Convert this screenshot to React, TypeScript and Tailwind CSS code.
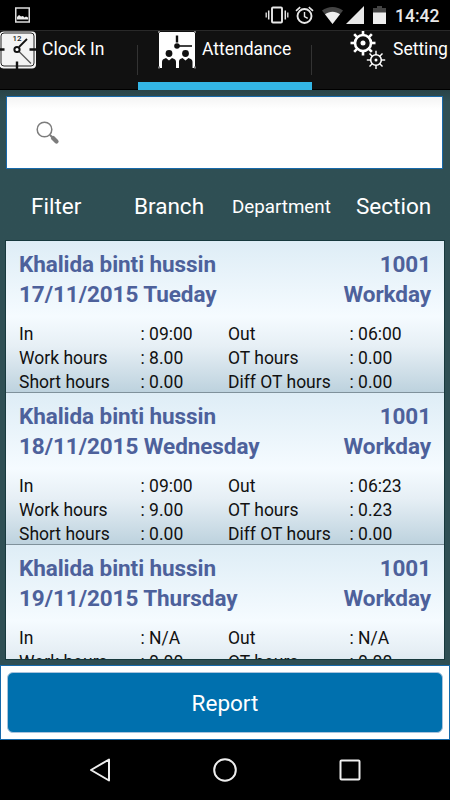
interface AttendanceRecord {
  name: string;
  staffId: string;
  date: string;
  dayType: string;
  timeIn: string;
  timeOut: string;
  workHours: string;
  otHours: string;
  shortHours: string;
  diffOtHours: string;
}

const records: AttendanceRecord[] = [
  {
    name: 'Khalida binti hussin',
    staffId: '1001',
    date: '17/11/2015 Tueday',
    dayType: 'Workday',
    timeIn: '09:00',
    timeOut: '06:00',
    workHours: '8.00',
    otHours: '0.00',
    shortHours: '0.00',
    diffOtHours: '0.00',
  },
  {
    name: 'Khalida binti hussin',
    staffId: '1001',
    date: '18/11/2015 Wednesday',
    dayType: 'Workday',
    timeIn: '09:00',
    timeOut: '06:23',
    workHours: '9.00',
    otHours: '0.23',
    shortHours: '0.00',
    diffOtHours: '0.00',
  },
  {
    name: 'Khalida binti hussin',
    staffId: '1001',
    date: '19/11/2015 Thursday',
    dayType: 'Workday',
    timeIn: 'N/A',
    timeOut: 'N/A',
    workHours: '0.00',
    otHours: '0.00',
    shortHours: '0.00',
    diffOtHours: '0.00',
  },
];

const gearTeeth = [0, 45, 90, 135, 180, 225, 270, 315];

function ClockIcon() {
  return (
    <svg className="h-[38px] w-[36px] shrink-0" viewBox="0 0 36 38" fill="none">
      <rect x="-0.5" y="0.5" width="36.5" height="37" rx="4" fill="#f4f4f4" />
      <rect x="1" y="2" width="33" height="33" rx="3" stroke="#222" strokeWidth="1" />
      <path d="M0 18.5h4.5M29.5 18.5h6.5M17 30.5v7.5" stroke="#111" strokeWidth="2.4" />
      <text x="12.5" y="9.5" fontSize="8" fontWeight="500" fill="#222" textLength="9" lengthAdjust="spacingAndGlyphs">
        12
      </text>
      <path d="M19 16l8-8" stroke="#111" strokeWidth="1.8" />
      <path d="M19 20.5l12 12" stroke="#555" strokeWidth="1.3" />
      <circle cx="17" cy="18.5" r="2.6" fill="#fff" stroke="#111" strokeWidth="2" />
    </svg>
  );
}

function AttendanceIcon() {
  return (
    <svg className="h-[38px] w-[38px] shrink-0" viewBox="0 0 38 38" fill="none">
      <rect x="1" y="1" width="36" height="36" fill="#fff" />
      <path d="M0 0h2v2H0zM36 0h2v2h-2zM0 35.5h2v2H0zM36 35.5h2v2h-2z" fill="#777" />
      <path d="M19 4.5v7" stroke="#111" strokeWidth="2.4" />
      <path d="M19 15h15" stroke="#111" strokeWidth="1.6" />
      <circle cx="19" cy="15" r="2.8" fill="#111" />
      <circle cx="11" cy="22.5" r="3.4" fill="#111" />
      <circle cx="27.5" cy="22.5" r="3.4" fill="#111" />
      <path
        d="M4 38v-7c0-2 1-3 3-3.5l1-.5 3 2.5 3-2.500 1 .5c2 .5 3 1.5 3 3.500v7zM21 38v-7c0-2 .5-3 2.500-3.500l1-.5 3 2.500 3-2.500 1 .5c2 .5 3 1.500 3 3.500v7z"
        fill="#111"
      />
    </svg>
  );
}

function SettingIcon() {
  return (
    <svg className="h-[38px] w-[36px] shrink-0" viewBox="0 0 36 38" fill="none" stroke="#fff">
      {gearTeeth.map((angle) => (
        <path key={angle} d="M13 5V-.5" strokeWidth="2.6" transform={`rotate(${angle} 13 12)`} />
      ))}
      <circle cx="13" cy="12" r="8" strokeWidth="2.6" />
      <circle cx="13" cy="12" r="2.5" fill="#fff" stroke="none" />
      {gearTeeth.map((angle) => (
        <path key={angle} d="M26 24v-4.2" strokeWidth="1.4" transform={`rotate(${angle} 26 29)`} />
      ))}
      <circle cx="26" cy="29" r="5.3" strokeWidth="1.6" />
      <circle cx="26" cy="29" r="1.5" fill="#fff" stroke="none" />
    </svg>
  );
}

function StatusBar() {
  return (
    <div className="flex h-[30px] shrink-0 items-center bg-black pr-[10px] pl-[15px]">
      <svg className="h-4 w-[15px]" viewBox="0 0 15 16" fill="none">
        <rect x="0.75" y="1" width="13.5" height="14" stroke="#ddd" strokeWidth="1.5" />
        <path d="M2 12.5V10l2-2 2 1.5 2-.5 1.5 1.5L11 9.5l2 1v2z" fill="#eee" />
      </svg>
      <svg className="ml-auto h-5 w-[24px]" viewBox="0 0 24 20" fill="none" stroke="#e8e8e8">
        <rect x="7" y="2.5" width="10" height="15" rx="1" strokeWidth="1.9" />
        <path d="M3.7 5.5v9M20.3 5.5v9" strokeWidth="1.5" />
        <path d="M1.2 7.5v5M22.8 7.5v5" strokeWidth="1.3" />
      </svg>
      <svg className="ml-[6px] h-5 w-[19px]" viewBox="0 0 19 20" fill="none" stroke="#e8e8e8">
        <circle cx="9.5" cy="11" r="7" strokeWidth="1.9" />
        <path d="M1 5.8l4.2-3.6M18 5.8l-4.2-3.6" strokeWidth="1.7" />
        <path d="M9.5 7v4.5l3.2 1.9" strokeWidth="1.4" />
      </svg>
      <svg className="ml-[7px] h-5 w-[23px]" viewBox="0 0 23 20">
        <path d="M11.5 19L1 5.5c6-4.700 15-4.700 21 0z" fill="#444" />
        <path d="M11.5 19L4 9.300c4.300-3.400 10.700-3.400 15 0z" fill="#eee" />
      </svg>
      <svg className="ml-[2px] h-5 w-[18px]" viewBox="0 0 18 20">
        <path d="M0 19L18 1v18z" fill="#e8e8e8" />
      </svg>
      <svg className="ml-[9px] h-5 w-[13px]" viewBox="0 0 13 20">
        <path d="M4 1h5v2h4v5H0V3h4z" fill="#444" />
        <path d="M0 7.5h13V19H0z" fill="#eee" />
      </svg>
      <span className="mt-px ml-[9px] w-[45px] text-[17.5px] leading-[30px] font-medium text-[#e8e8e8]">14:42</span>
    </div>
  );
}

function TabBar() {
  return (
    <div className="flex h-[60px] shrink-0 border-t border-[#292929] bg-[#111] text-[17.5px] text-white">
      <div className="flex w-[138px] border-b border-black">
        <ClockIcon />
        <span className="ml-[6px] leading-[37px]">Clock In</span>
        <span className="mt-[14px] ml-auto h-[30px] w-px bg-[#333]" />
      </div>
      <div className="flex w-[174px] border-b-8 border-[#33b5e5] pl-[20px]">
        <AttendanceIcon />
        <span className="ml-[6px] leading-[37px]">Attendance</span>
        <span className="mt-[14px] ml-auto h-[30px] w-px bg-[#333]" />
      </div>
      <div className="flex w-[138px] border-b border-black pl-[38px]">
        <SettingIcon />
        <span className="ml-[7px] leading-[37px]">Setting</span>
      </div>
    </div>
  );
}

function Field({ label, value }: { label: string; value: string }) {
  return (
    <div className="flex">
      <span className="w-[121.5px]">{label}</span>
      <span>: {value}</span>
    </div>
  );
}

function AttendanceRow({ record }: { record: AttendanceRecord }) {
  return (
    <div className="h-[152px] shrink-0 border-b border-[#7f919b] bg-[linear-gradient(to_bottom,#deedf6_0%,#f5fbff_50%,#e6eff5_70%,#bdd2de_100%)] pt-2 pr-[13px] pl-[13px]">
      <div className="text-[22.5px] leading-[30px] font-bold tracking-[-0.07px] text-[#4d619b]">
        <div className="flex justify-between">
          <span>{record.name}</span>
          <span>{record.staffId}</span>
        </div>
        <div className="flex justify-between">
          <span>{record.date}</span>
          <span>{record.dayType}</span>
        </div>
      </div>
      <div className="mt-[13px] grid grid-cols-[209px_1fr] text-[17.5px] leading-[24px] text-[#111]">
        <Field label="In" value={record.timeIn} />
        <Field label="Out" value={record.timeOut} />
        <Field label="Work hours" value={record.workHours} />
        <Field label="OT hours" value={record.otHours} />
        <Field label="Short hours" value={record.shortHours} />
        <Field label="Diff OT hours" value={record.diffOtHours} />
      </div>
    </div>
  );
}

function NavBar() {
  return (
    <div className="flex h-[60px] shrink-0 items-center justify-between bg-black px-[88px]">
      <svg className="h-6 w-6" viewBox="0 0 24 24" fill="none" stroke="#eee" strokeWidth="2">
        <path d="M3 12L21 1.5v21z" strokeLinejoin="round" />
      </svg>
      <svg className="h-6 w-6" viewBox="0 0 24 24" fill="none" stroke="#eee" strokeWidth="2">
        <circle cx="12" cy="12" r="10.8" />
      </svg>
      <svg className="h-6 w-6" viewBox="0 0 24 24" fill="none" stroke="#eee" strokeWidth="2">
        <rect x="2.5" y="2.5" width="19" height="19" rx="1" />
      </svg>
    </div>
  );
}

export default function App() {
  return (
    <div className="flex h-[800px] w-[450px] flex-col overflow-hidden bg-black font-['Roboto',sans-serif]">
      <StatusBar />
      <TabBar />

      <div className="flex h-[575px] shrink-0 flex-col bg-[#2f4f54] bg-linear-to-b from-[#294448] to-[#2f4f54] to-[12px] px-[6px] pt-[6px]">
        {/* Search */}
        <div className="mr-px flex h-[73px] shrink-0 items-center border border-[#1769aa] bg-white bg-linear-to-b from-[#f4f4f4] to-white to-[12px] pl-[29px]">
          <svg className="h-6 w-6" viewBox="0 0 24 24" fill="none" stroke="#7c7c7c">
            <circle cx="8.5" cy="8.5" r="7.3" strokeWidth="1.5" />
            <path d="M14 14l2 2" strokeWidth="2" />
            <path d="M17 17l3.5 3.5" strokeWidth="4.2" strokeLinecap="round" />
          </svg>
        </div>

        {/* Filters */}
        <div className="flex h-[72px] shrink-0 items-center pt-[4px] pl-[25px] text-[22.5px] text-white">
          <span className="w-[103px]">Filter</span>
          <span className="w-[98px]">Branch</span>
          <span className="w-[124px] text-[18.75px]">Department</span>
          <span>Section</span>
        </div>

        {/* Attendance list */}
        <div className="flex h-[418px] shrink-0 flex-col overflow-hidden outline outline-[#17393d]">
          {records.map((record) => (
            <AttendanceRow key={record.date} record={record} />
          ))}
        </div>
      </div>

      <div className="h-[75px] shrink-0 border border-[#1769aa] bg-white p-[6px]">
        <button className="h-[61px] w-full rounded-[6px] border border-[#a9c3dd] bg-[#0070ae] pt-[2px] text-[22.5px] text-white">
          Report
        </button>
      </div>
      <NavBar />
    </div>
  );
}
